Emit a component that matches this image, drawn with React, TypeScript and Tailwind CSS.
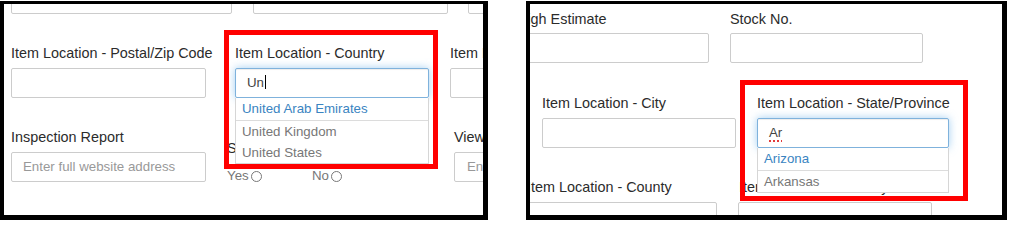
import type { ReactNode } from "react";

function Label({ children, className = "" }: { children: ReactNode; className?: string }) {
  return (
    <div className={`h-[17px] whitespace-nowrap text-[14.4px] leading-[17px] text-[#2b2b2b] ${className}`}>
      {children}
    </div>
  );
}

function Box({ placeholder, className = "" }: { placeholder?: string; className?: string }) {
  return (
    <div
      className={`h-[30px] shrink-0 overflow-hidden whitespace-nowrap rounded-[2px] border border-[#ccc] bg-white px-[11px] text-[13.3px] leading-[28px] text-[#999] ${className}`}
    >
      {placeholder}
    </div>
  );
}

function Typeahead({
  value,
  items,
  spell,
}: {
  value: string;
  items: string[];
  spell?: boolean;
}) {
  return (
    <div className="relative mt-[6px]">
      <div className="h-[30px] rounded-[2px] border border-[#7fb2dc] bg-white px-[11px] text-[13.3px] leading-[28px] text-[#444] shadow-[inset_0_1px_1px_rgba(0,0,0,0.075),0_0_8px_rgba(102,175,233,0.6)]">
        <span
          className={
            spell ? "underline decoration-[#e23b3b] decoration-dotted decoration-2 underline-offset-[3px]" : ""
          }
        >
          {value}
        </span>
        {!spell && <span className="ml-px inline-block h-[14px] w-px translate-y-[2px] bg-black" />}
      </div>
      {/* suggestion list */}
      <div className="absolute left-0 right-0 top-full z-10 border border-t-0 border-[#d6d6d6] bg-white text-[13.3px]">
        {items.map((item, i) => (
          <div
            key={item}
            className={`whitespace-nowrap px-[6px] ${
              i === 0
                ? "h-[23px] border-b border-[#dcdcdc] leading-[22px] text-[#3a84c1]"
                : "h-[21px] leading-[21px] text-[#777]"
            }`}
          >
            {item}
          </div>
        ))}
      </div>
    </div>
  );
}

function Radio({ label }: { label: string }) {
  return (
    <span className="inline-flex w-[85px] items-center text-[13.3px] leading-[16px] text-[#777]">
      {label}
      <span className="ml-[2px] inline-block h-[11px] w-[11px] rounded-full border border-[#777] bg-white" />
    </span>
  );
}

function Panel({ children, className = "" }: { children: ReactNode; className?: string }) {
  return (
    <div
      className={`relative h-[219px] shrink-0 overflow-hidden border-solid border-black border-t-[3px] border-l-[4px] border-r-[5px] border-b-[5px] bg-white ${className}`}
    >
      {children}
    </div>
  );
}

export default function App() {
  return (
    <div className="h-[224px] w-[1010px] overflow-hidden bg-white pt-px font-['Liberation_Sans',Arial,sans-serif]">
      <div className="flex">
        {/* Left capture: country lookup */}
        <Panel className="w-[488px]">
          <div className="-mt-[20px] flex">
            <Box className="ml-[7px] w-[221px]" />
            <Box className="ml-[21px] w-[195px]" />
            <Box className="ml-[20px] w-[60px]" />
          </div>

          <div className="mt-[31px] flex items-start">
            <div className="ml-[7px] w-[195px] shrink-0">
              <Label>Item Location - Postal/Zip Code</Label>
              <Box className="mt-[6px]" />
            </div>
            <div className="relative z-10 ml-[29px] w-[194px] shrink-0">
              <Label>Item Location - Country</Label>
              <Typeahead value="Un" items={["United Arab Emirates", "United Kingdom", "United States"]} />
            </div>
            <div className="ml-[21px] w-[120px] shrink-0">
              <Label>Item Location - State/Province</Label>
              <Box className="mt-[6px]" />
            </div>
          </div>

          <div className="mt-[31px] flex items-start">
            <div className="ml-[7px] w-[195px] shrink-0">
              <Label>Inspection Report</Label>
              <Box className="mt-[6px]" placeholder="Enter full website address" />
            </div>
            <div className="ml-[21px] w-[206px] shrink-0 pt-[11px]">
              <Label>Ships Internationally</Label>
              <div className="mt-[11px] flex">
                <Radio label="Yes" />
                <Radio label="No" />
              </div>
            </div>
            <div className="ml-[21px] w-[120px] shrink-0">
              <Label>View Online Listing</Label>
              <Box className="mt-[6px] px-[12px]" placeholder="Enter full website address" />
            </div>
          </div>

          <div className="pointer-events-none absolute left-[220px] top-[26px] z-20 h-[139px] w-[214px] border-[5px] border-[#ff0000]" />
        </Panel>

        {/* Right capture: state lookup */}
        <Panel className="ml-[38px] w-[481px]">
          <div className="mt-[7px] flex items-start">
            <div className="-ml-[13px] w-[192px] shrink-0">
              <Label>High Estimate</Label>
              <Box className="mt-[5px]" />
            </div>
            <div className="ml-[21px] w-[193px] shrink-0">
              <Label>Stock No.</Label>
              <Box className="mt-[5px]" />
            </div>
          </div>

          <div className="mt-[32px] flex items-start">
            <div className="ml-[12px] w-[194px] shrink-0">
              <Label>Item Location - City</Label>
              <Box className="mt-[6px]" />
            </div>
            <div className="relative z-10 ml-[21px] w-[192px] shrink-0">
              <Label>Item Location - State/Province</Label>
              <Typeahead value="Ar" items={["Arizona", "Arkansas"]} spell />
            </div>
          </div>

          <div className="mt-[31px] flex items-start">
            <div className="-ml-[3px] w-[190px] shrink-0">
              <Label>Item Location - County</Label>
              <Box className="mt-[6px]" />
            </div>
            <div className="ml-[21px] w-[194px] shrink-0">
              <Label className="pl-px">Item Location - Country</Label>
              <Box className="mt-[6px]" />
            </div>
          </div>

          <div className="pointer-events-none absolute left-[210px] top-[76px] z-20 h-[121px] w-[228px] border-[5px] border-[#ff0000]" />
        </Panel>
      </div>
    </div>
  );
}
